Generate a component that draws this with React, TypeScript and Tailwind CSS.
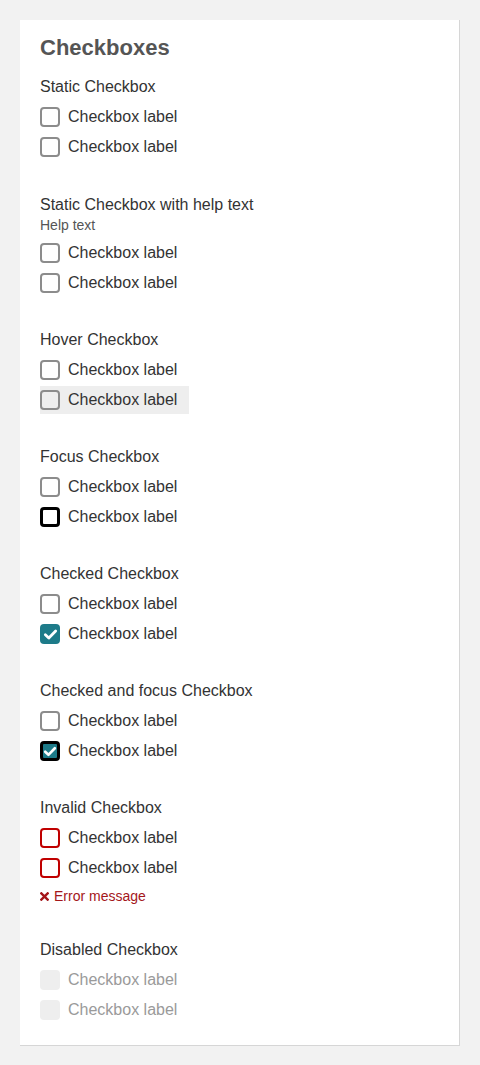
type BoxState = 'default' | 'hover' | 'focus' | 'checked' | 'checkedFocus' | 'invalid' | 'disabled';

type Group = {
  title: string;
  help?: string;
  boxes: BoxState[];
  error?: string;
};

const groups: Group[] = [
  { title: 'Static Checkbox', boxes: ['default', 'default'] },
  { title: 'Static Checkbox with help text', help: 'Help text', boxes: ['default', 'default'] },
  { title: 'Hover Checkbox', boxes: ['default', 'hover'] },
  { title: 'Focus Checkbox', boxes: ['default', 'focus'] },
  { title: 'Checked Checkbox', boxes: ['default', 'checked'] },
  { title: 'Checked and focus Checkbox', boxes: ['default', 'checkedFocus'] },
  { title: 'Invalid Checkbox', boxes: ['invalid', 'invalid'], error: 'Error message' },
  { title: 'Disabled Checkbox', boxes: ['disabled', 'disabled'] },
];

// gap under each group, last one has none
const gaps = ['mb-[33px]', 'mb-[32px]', 'mb-[32px]', 'mb-[32px]', 'mb-[32px]', 'mb-[32px]', 'mb-[35px]', ''];

function Check() {
  return (
    <svg viewBox="0 0 16 16" className="h-[15px] w-[15px]" fill="none">
      <path d="M2.5 8.3 L6.2 11.8 L13.5 4.3" stroke="white" strokeWidth="3" strokeLinecap="round" strokeLinejoin="round" />
    </svg>
  );
}

function Box({ state }: { state: BoxState }) {
  const styles: Record<BoxState, string> = {
    default: 'border-2 border-[#8c8c8c] bg-white',
    hover: 'border-2 border-[#8c8c8c] bg-[#eeeeee]',
    focus: 'border-[3px] border-black bg-white',
    checked: 'bg-[#1d7b89]',
    checkedFocus: 'border-[3px] border-black bg-[#1d7b89]',
    invalid: 'border-2 border-[#c00000] bg-white',
    disabled: 'bg-[#eeeeee]',
  };
  const checked = state === 'checked' || state === 'checkedFocus';
  return (
    <span className={`flex h-5 w-5 shrink-0 items-center justify-center rounded-[4px] ${styles[state]}`}>
      {checked && <Check />}
    </span>
  );
}

function Row({ state }: { state: BoxState }) {
  const hover = state === 'hover';
  const disabled = state === 'disabled';
  return (
    <div className={`flex h-7 w-[149px] items-center gap-2 ${hover ? 'bg-[#eeeeee]' : ''}`}>
      <Box state={state} />
      <span className={`text-base leading-5 ${disabled ? 'text-[#9a9a9a]' : 'text-[#333333]'}`}>Checkbox label</span>
    </div>
  );
}

export default function App() {
  return (
    <div className="min-h-[1065px] bg-[#f2f2f2] p-5 font-['Liberation_Sans',Arial,sans-serif]">
      <section className="border-r border-b border-[#d6d6d6] bg-white px-5 pt-4 pb-[21px]">
        <h1 className="mb-4 text-[22px] font-bold leading-6 text-[#555555]">Checkboxes</h1>
        {groups.map((group, i) => (
          <div key={group.title} className={gaps[i]}>
            <div className="text-base leading-[21px] text-[#333333]">{group.title}</div>
            {group.help && <div className="mt-[2px] text-sm leading-4 text-[#555555]">{group.help}</div>}
            <div className={`${group.help ? 'mt-[6px]' : 'mt-[6px]'} flex flex-col gap-[2px]`}>
              {group.boxes.map((state, j) => (
                <Row key={j} state={state} />
              ))}
            </div>
            {group.error && (
              <div className="mt-[6px] flex items-center gap-[5px] text-sm leading-4 text-[#a4161a]">
                <svg viewBox="0 0 10 10" className="h-[9px] w-[9px]">
                  <path d="M1.5 1.5 L8.5 8.5 M8.5 1.5 L1.5 8.5" stroke="#a4161a" strokeWidth="2.6" strokeLinecap="square" />
                </svg>
                {group.error}
              </div>
            )}
          </div>
        ))}
      </section>
    </div>
  );
}
